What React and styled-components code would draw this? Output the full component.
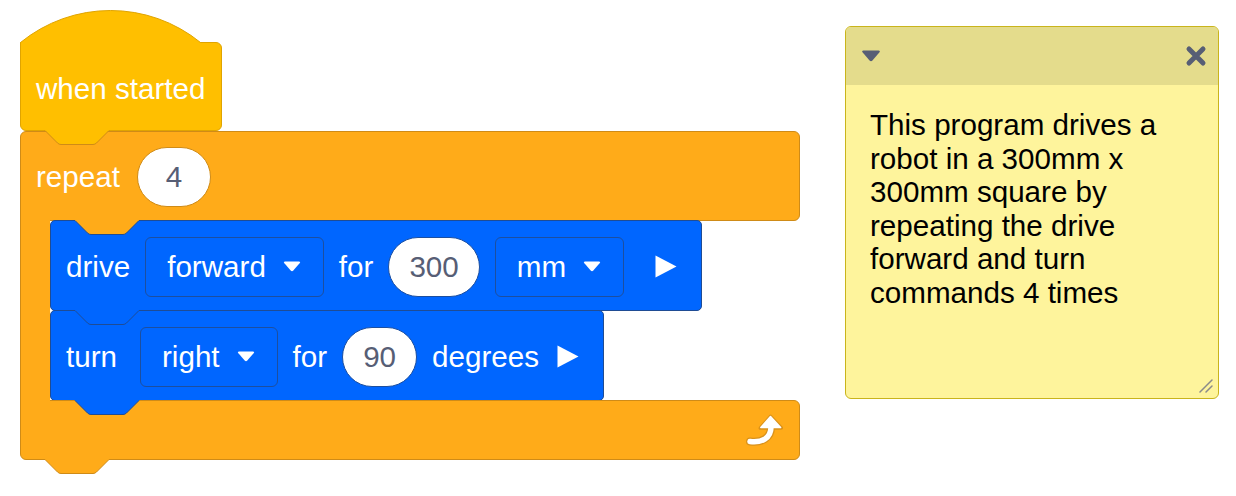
import styled, { createGlobalStyle } from 'styled-components';

const colors = {
  hat: { fill: '#ffbf00', line: '#e0a400' },
  control: { fill: '#ffab19', line: '#cf8b17' },
  motion: { fill: '#0066ff', line: '#1f4c94' },
  field: '#1d4f9f',
  fieldText: '#575e75',
};

const textSize = '29.6px';

const GlobalStyle = createGlobalStyle`
  body {
    margin: 0;
    background: #fff;
    font-family: "Liberation Sans", Arial, sans-serif;
  }
`;

const Workspace = styled.div`
  display: flex;
  align-items: flex-start;
  height: 496px;
  box-sizing: border-box;
  padding: 10px 0 0 20px;
  overflow: hidden;
`;

const Script = styled.div`
  display: flex;
  flex-direction: column;
  width: 780px;
`;

const Label = styled.span`
  color: #fff;
  font-size: ${textSize};
  white-space: nowrap;
  margin-right: ${p => p.$extra || 0}px;
`;

/* ---------- connector tab (drawn shape) ---------- */

const TabSvg = styled.svg`
  position: absolute;
  left: ${p => p.$left}px;
  top: 100%;
  z-index: 3;
  overflow: visible;
`;

function Tab({ fill, line, left = 24 }) {
  const outline =
    'M0,0.5 L12.5,13 Q14,14.5 16,14.5 L48,14.5 Q50,14.5 51.5,13 L64,0.5';
  return (
    <TabSvg $left={left} width="64" height="16" viewBox="0 0 64 16">
      <path d={outline + ' L64,0 L0,0 Z'} fill={fill} />
      <path d={outline} fill="none" stroke={line} />
    </TabSvg>
  );
}

/* ---------- hat block ---------- */

const Hat = styled.div`
  display: flex;
  flex-direction: column;
  align-self: flex-start;
`;

const HatCap = styled.svg`
  position: relative;
  z-index: 1;
  display: block;
  margin-bottom: -2px;
`;

const HatBody = styled.div`
  position: relative;
  display: flex;
  align-items: center;
  box-sizing: border-box;
  height: 89px;
  padding: 4px 16px 0 15px;
  background: ${colors.hat.fill};
  border: 1px solid ${colors.hat.line};
  border-radius: 0 6px 6px 6px;
`;

/* ---------- stack blocks ---------- */

const Block = styled.div`
  position: relative;
  display: flex;
  align-items: center;
  gap: 15px;
  box-sizing: border-box;
  height: 91px;
  padding: 2px 24px 0 15px;
  background: ${p => p.$fill};
  border: 1px solid ${p => p.$line};
  border-radius: 5px;

  & + & {
    margin-top: -1px;
  }
`;

const Dropdown = styled.div`
  display: flex;
  align-items: center;
  gap: 17px;
  box-sizing: border-box;
  height: 60px;
  padding: 0 22px 0 21px;
  border: 1px solid ${colors.field};
  border-radius: 6px;
  color: #fff;
  font-size: ${textSize};
  white-space: nowrap;
`;

const NumberField = styled.div`
  display: flex;
  align-items: center;
  justify-content: center;
  box-sizing: border-box;
  min-width: 74px;
  height: 60px;
  padding: 0 20px;
  background: #fff;
  border: 1px solid ${p => p.$line};
  border-radius: 30px;
  color: ${colors.fieldText};
  font-size: ${textSize};
`;

const PlaySvg = styled.svg`
  display: block;
  flex: none;
  margin-left: ${p => p.$extra || 0}px;
`;

function Caret({ color = '#fff', w = 18, h = 11 }) {
  return (
    <svg width={w} height={h} viewBox="0 0 18 11" style={{ display: 'block', flex: 'none' }}>
      <path
        d="M2,0.5 L16,0.5 Q18,0.5 16.6,2.2 L10.3,9.6 Q9,11 7.7,9.6 L1.4,2.2 Q0,0.5 2,0.5 Z"
        fill={color}
      />
    </svg>
  );
}

function Play({ extra }) {
  return (
    <PlaySvg $extra={extra} width="22" height="23" viewBox="0 0 22 23">
      <path d="M0.5,0.5 L21.5,11.5 L0.5,22.5 Z" fill="#fff" />
    </PlaySvg>
  );
}

/* ---------- repeat (C) block ---------- */

const Repeat = styled.div`
  display: flex;
  flex-direction: column;
`;

const RepeatHead = styled.div`
  position: relative;
  display: flex;
  align-items: center;
  gap: 17px;
  box-sizing: border-box;
  height: 90px;
  padding: 2px 15px 0;
  background: ${colors.control.fill};
  border: 1px solid ${colors.control.line};
  border-radius: 6px 6px 6px 0;
`;

const Mouth = styled.div`
  display: flex;
  margin: -1px 0;
`;

const Spine = styled.div`
  position: relative;
  z-index: 1;
  flex: none;
  width: 30px;
  margin: -1px 0;
  box-sizing: border-box;
  background: ${colors.control.fill};
  border-left: 1px solid ${colors.control.line};
`;

const Stack = styled.div`
  display: flex;
  flex-direction: column;
  align-items: flex-start;
`;

const RepeatFoot = styled.div`
  position: relative;
  display: flex;
  align-items: center;
  justify-content: flex-end;
  box-sizing: border-box;
  height: 60px;
  padding: 2px 16px 0 0;
  background: ${colors.control.fill};
  border: 1px solid ${colors.control.line};
  border-radius: 0 6px 6px 6px;
`;

function LoopArrow() {
  return (
    <svg width="38" height="34" viewBox="0 0 38 34" style={{ display: 'block' }}>
      <path d="M26,13 C26,24 17,29 5,27.5" fill="none" stroke="#d9921c" strokeWidth="8" strokeLinecap="round" />
      <path d="M25.5,1.5 L37,13.5 Q37.6,14.8 36,14.8 L15.5,14.8 Q14,14.8 14.8,13.5 Z" fill="#d9921c" stroke="#d9921c" strokeWidth="2" strokeLinejoin="round" />
      <path d="M26,13 C26,24 17,29 5,27.5" fill="none" stroke="#fff" strokeWidth="5.5" strokeLinecap="round" />
      <path d="M25.5,2.5 L35.6,13.5 L15.8,13.5 Z" fill="#fff" stroke="#fff" strokeWidth="1.5" strokeLinejoin="round" />
    </svg>
  );
}

/* ---------- comment note ---------- */

const Note = styled.div`
  position: relative;
  display: flex;
  flex-direction: column;
  box-sizing: border-box;
  width: 374px;
  height: 373px;
  margin: 16px 0 0 45px;
  background: #fef49c;
  border: 1px solid #c9b41c;
  border-radius: 6px;
  overflow: hidden;
`;

const NoteHeader = styled.div`
  display: flex;
  align-items: center;
  justify-content: space-between;
  height: 58px;
  padding: 0 11px 0 15px;
  background: #e4dc8c;
`;

const NoteText = styled.p`
  margin: 0;
  padding: 23px 25px 0 24px;
  color: #000;
  font-size: ${textSize};
  line-height: 33.5px;
`;

const Grip = styled.svg`
  position: absolute;
  right: 5px;
  bottom: 5px;
`;

export default function App() {
  const { hat, control, motion } = colors;
  return (
    <>
      <GlobalStyle />
      <Workspace>
        <Script>
          <Hat>
            <HatCap width="182" height="34" viewBox="0 0 182 34">
              <path d="M0.5,34 L0.5,32.5 A142.6,142.6 0 0 1 180.5,32.5 L180.5,34 Z" fill={hat.fill} />
              <path d="M0.5,34 L0.5,32.5 A142.6,142.6 0 0 1 180.5,32.5" fill="none" stroke={hat.line} />
            </HatCap>
            <HatBody>
              <Label>when started</Label>
              <Tab fill={hat.fill} line={control.line} />
            </HatBody>
          </Hat>

          <Repeat>
            <RepeatHead>
              <Label>repeat</Label>
              <NumberField $line={control.line}>4</NumberField>
              <Tab fill={control.fill} line={motion.line} left={54} />
            </RepeatHead>
            <Mouth>
              <Spine />
              <Stack>
                <Block $fill={motion.fill} $line={motion.line}>
                  <Label>drive</Label>
                  <Dropdown>
                    forward
                    <Caret />
                  </Dropdown>
                  <Label>for</Label>
                  <NumberField $line={colors.field}>300</NumberField>
                  <Dropdown>
                    mm
                    <Caret />
                  </Dropdown>
                  <Play extra={16} />
                  <Tab fill={motion.fill} line={motion.line} />
                </Block>
                <Block $fill={motion.fill} $line={motion.line}>
                  <Label $extra={8}>turn</Label>
                  <Dropdown>
                    right
                    <Caret />
                  </Dropdown>
                  <Label>for</Label>
                  <NumberField $line={colors.field}>90</NumberField>
                  <Label>degrees</Label>
                  <Play extra={3} />
                  <Tab fill={motion.fill} line={motion.line} />
                </Block>
              </Stack>
            </Mouth>
            <RepeatFoot>
              <LoopArrow />
              <Tab fill={control.fill} line={control.line} />
            </RepeatFoot>
          </Repeat>
        </Script>

        <Note>
          <NoteHeader>
            <Caret color="#575e75" w={20} h={12} />
            <svg width="22" height="22" viewBox="0 0 22 22" style={{ display: 'block' }}>
              <path d="M4,4 L18,18 M18,4 L4,18" stroke="#575e75" strokeWidth="5" strokeLinecap="round" />
            </svg>
          </NoteHeader>
          <NoteText>
            This program drives a robot in a 300mm x 300mm square by repeating the drive forward and turn commands 4 times
          </NoteText>
          <Grip width="14" height="14" viewBox="0 0 14 14">
            <path d="M1,13 L13,1 M7,13 L13,7" stroke="#8a8a8a" strokeWidth="1.5" strokeLinecap="round" />
          </Grip>
        </Note>
      </Workspace>
    </>
  );
}
